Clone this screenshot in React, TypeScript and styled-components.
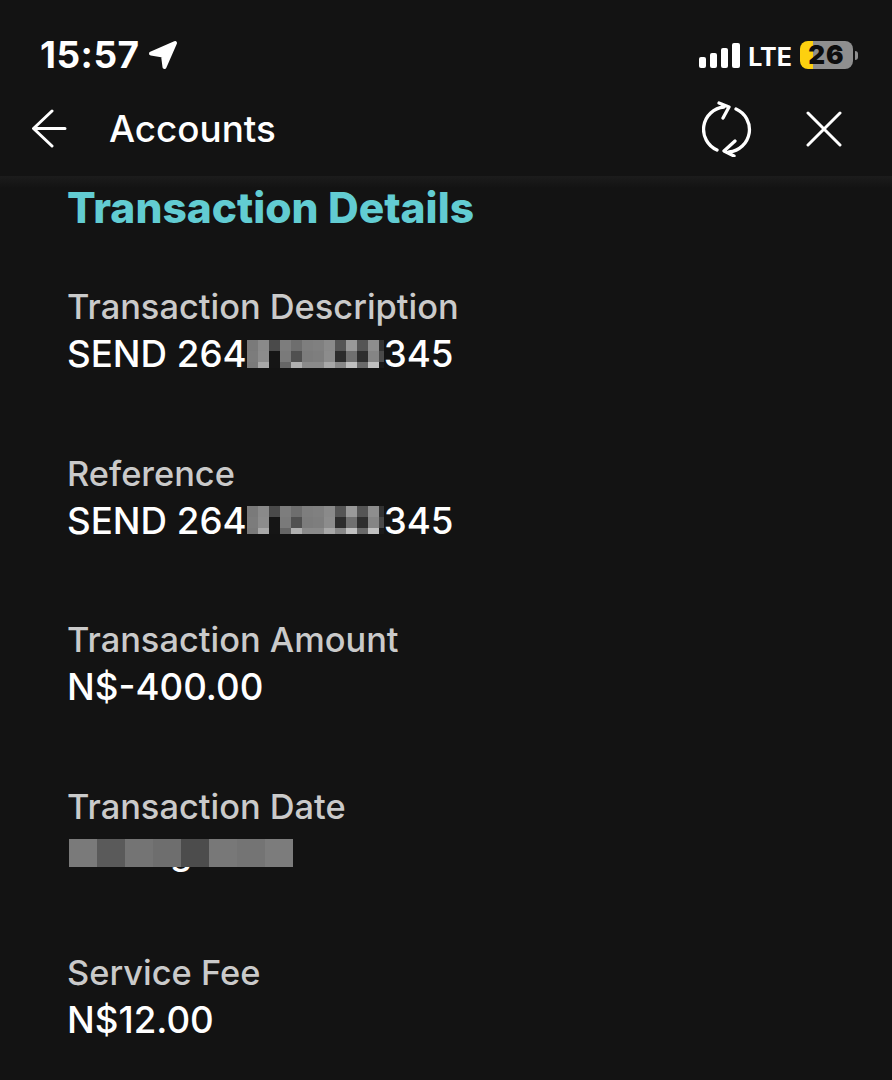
import styled, { createGlobalStyle } from "styled-components";

const GlobalStyle = createGlobalStyle`
    html, body {
        margin: 0;
        padding: 0;
        background-color: #131313;
    }
    * {
        box-sizing: border-box;
    }
`;

const Screen = styled.div`
    width: 892px;
    height: 1080px;
    overflow: hidden;
    background-color: #131313;
    color: white;
    font-family: Inter, "Liberation Sans", sans-serif;
`;

const StatusBar = styled.div`
    height: 88px;
    padding: 22px 34px 0 40px;
    display: flex;
    align-items: center;
    justify-content: space-between;
`;
const TimeGroup = styled.div`
    display: flex;
    align-items: center;
    gap: 8px;
`;
const Time = styled.span`
    font-size: 37px;
    font-weight: 700;
    letter-spacing: 0.5px;
    line-height: 44px;
`;
const StatusRight = styled.div`
    display: flex;
    align-items: center;
`;
const Network = styled.span`
    margin: 3px 0 0 8px;
    font-size: 25px;
    font-weight: 700;
    line-height: 30px;
`;
const Battery = styled.div`
    margin-left: 8px;
    width: 53px;
    height: 28px;
    border-radius: 8px;
    background: linear-gradient(to right, #fdd00f 0 13px, #8f8f8f 13px);
    color: #0d0d0d;
    font-size: 26px;
    font-weight: 900;
    letter-spacing: 1px;
    line-height: 28px;
    text-align: center;
`;
const BatteryNub = styled.div`
    margin-left: 2px;
    width: 3px;
    height: 9px;
    border-radius: 0 3px 3px 0;
    background-color: #8f8f8f;
`;

const Header = styled.div`
    height: 88px;
    padding: 0 50px 7px 31px;
    display: flex;
    align-items: center;
`;
const HeaderTitle = styled.span`
    margin-left: 42px;
    font-size: 36.8px;
    font-weight: 500;
    flex: 1;
`;
const HeaderActions = styled.div`
    display: flex;
    align-items: center;
    gap: 54px;
`;

const Content = styled.div`
    padding: 9px 0 0 67px;
    background: linear-gradient(to bottom, #1c1c1c, #131313 12px);
`;
const PageTitle = styled.h1`
    margin: 0 0 52px;
    height: 46px;
    font-size: 42.5px;
    font-weight: 800;
    line-height: 46px;
    color: #62ccd2;
`;
const Field = styled.div`
    height: 166.5px;
`;
const Label = styled.div`
    height: 47px;
    font-size: 34.4px;
    font-weight: 500;
    line-height: 47px;
    color: #cacaca;
`;
const Value = styled.div`
    position: relative;
    height: 47px;
    font-size: 36.7px;
    font-weight: 500;
    line-height: 47px;
    color: white;
    display: flex;
    align-items: center;
`;
const Mosaic = styled.div<{ $cols: string; $rows: string }>`
    display: grid;
    grid-template-columns: ${(p) => p.$cols};
    grid-template-rows: ${(p) => p.$rows};
`;
const Cell = styled.div<{ $shade: string }>`
    background-color: ${(p) => p.$shade};
`;
const HiddenDate = styled.div`
    position: relative;
    width: 226px;
    margin-left: 2px;
`;
const Descender = styled.span`
    position: absolute;
    left: 101px;
    top: -11px;
    font-size: 36px;
    line-height: 47px;
`;
const DateMosaic = styled(Mosaic)`
    position: relative;
`;

const phoneCells = [
    "#7a7a7a", "#8a8a8a", "#4a4a4a", "#7d7d7d", "#6e6e6e", "#7e7e7e", "#808080", "#8a8a8a", "#555555", "#999999", "#555555", "#8e8e8e", "#333333",
    "#7c7c7c", "#8c8c8c", "#151515", "#7a7a7a", "#505050", "#7c7c7c", "#7e7e7e", "#8c8c8c", "#2c2c2c", "#707070", "#2e2e2e", "#858585", "#4a4a4a",
    "#7a7a7a", "#a8a8a8", "#151515", "#666666", "#b0b0b0", "#8a8a8a", "#8a8a8a", "#a8a8a8", "#888888", "#c0c0c0", "#6a6a6a", "#c0c0c0", "#1a1a1a",
];
const dateCells = ["#7a7a7a", "#5a5a5a", "#747474", "#6e6e6e", "#4c4c4c", "#787878", "#747474", "#7c7c7c"];

function PhoneNumber() {
    return (
        <Value>
            SEND 264
            <Mosaic $cols="repeat(12, 11px) 5px" $rows="11px 11px 6px">
                {phoneCells.map((shade, i) => (
                    <Cell key={i} $shade={shade} />
                ))}
            </Mosaic>
            345
        </Value>
    );
}

export default function App() {
    return (
        <Screen>
            <GlobalStyle />
            <StatusBar>
                <TimeGroup>
                    <Time>15:57</Time>
                    <svg width="30" height="30" viewBox="0 0 30 30">
                        <path d="M3 13.5 L27 3 L16.5 27 L15 15.5 Z" fill="white" stroke="white" strokeWidth="4" strokeLinejoin="round" />
                    </svg>
                </TimeGroup>
                <StatusRight>
                    <svg width="41" height="26" viewBox="0 0 41 26">
                        <rect x="0" y="15" width="7" height="11" rx="2" fill="white" />
                        <rect x="11" y="11" width="7" height="15" rx="2" fill="white" />
                        <rect x="22" y="6" width="7" height="20" rx="2" fill="white" />
                        <rect x="33" y="1" width="8" height="25" rx="2" fill="white" />
                    </svg>
                    <Network>LTE</Network>
                    <Battery>26</Battery>
                    <BatteryNub />
                </StatusRight>
            </StatusBar>
            <Header>
                <svg width="36" height="40" viewBox="0 0 36 40">
                    <path d="M34 19.5 H3 M21 2 L2.5 19.5 L21 37" fill="none" stroke="white" strokeWidth="3" strokeLinecap="round" strokeLinejoin="round" />
                </svg>
                <HeaderTitle>Accounts</HeaderTitle>
                <HeaderActions>
                    <svg width="50" height="56" viewBox="702 101 50 56">
                        <path d="M724 107 A22.5 22.5 0 0 0 717 150 M729 152 A22.5 22.5 0 0 0 736 109 M719 103 L729 107 L723 118 M735 141 L724 151 L734 156" fill="none" stroke="white" strokeWidth="3.3" strokeLinecap="round" strokeLinejoin="round" />
                    </svg>
                    <svg width="36" height="36" viewBox="0 0 36 36">
                        <path d="M2 2 L34 34 M34 2 L2 34" fill="none" stroke="white" strokeWidth="3" strokeLinecap="round" />
                    </svg>
                </HeaderActions>
            </Header>
            <Content>
                <PageTitle>Transaction Details</PageTitle>
                <Field>
                    <Label>Transaction Description</Label>
                    <PhoneNumber />
                </Field>
                <Field>
                    <Label>Reference</Label>
                    <PhoneNumber />
                </Field>
                <Field>
                    <Label>Transaction Amount</Label>
                    <Value>N$-400.00</Value>
                </Field>
                <Field>
                    <Label>Transaction Date</Label>
                    <Value>
                        <HiddenDate>
                            <Descender>g</Descender>
                            <DateMosaic $cols="repeat(8, 28px)" $rows="28px">
                                {dateCells.map((shade, i) => (
                                    <Cell key={i} $shade={shade} />
                                ))}
                            </DateMosaic>
                        </HiddenDate>
                    </Value>
                </Field>
                <Field>
                    <Label>Service Fee</Label>
                    <Value>N$12.00</Value>
                </Field>
            </Content>
        </Screen>
    );
}
